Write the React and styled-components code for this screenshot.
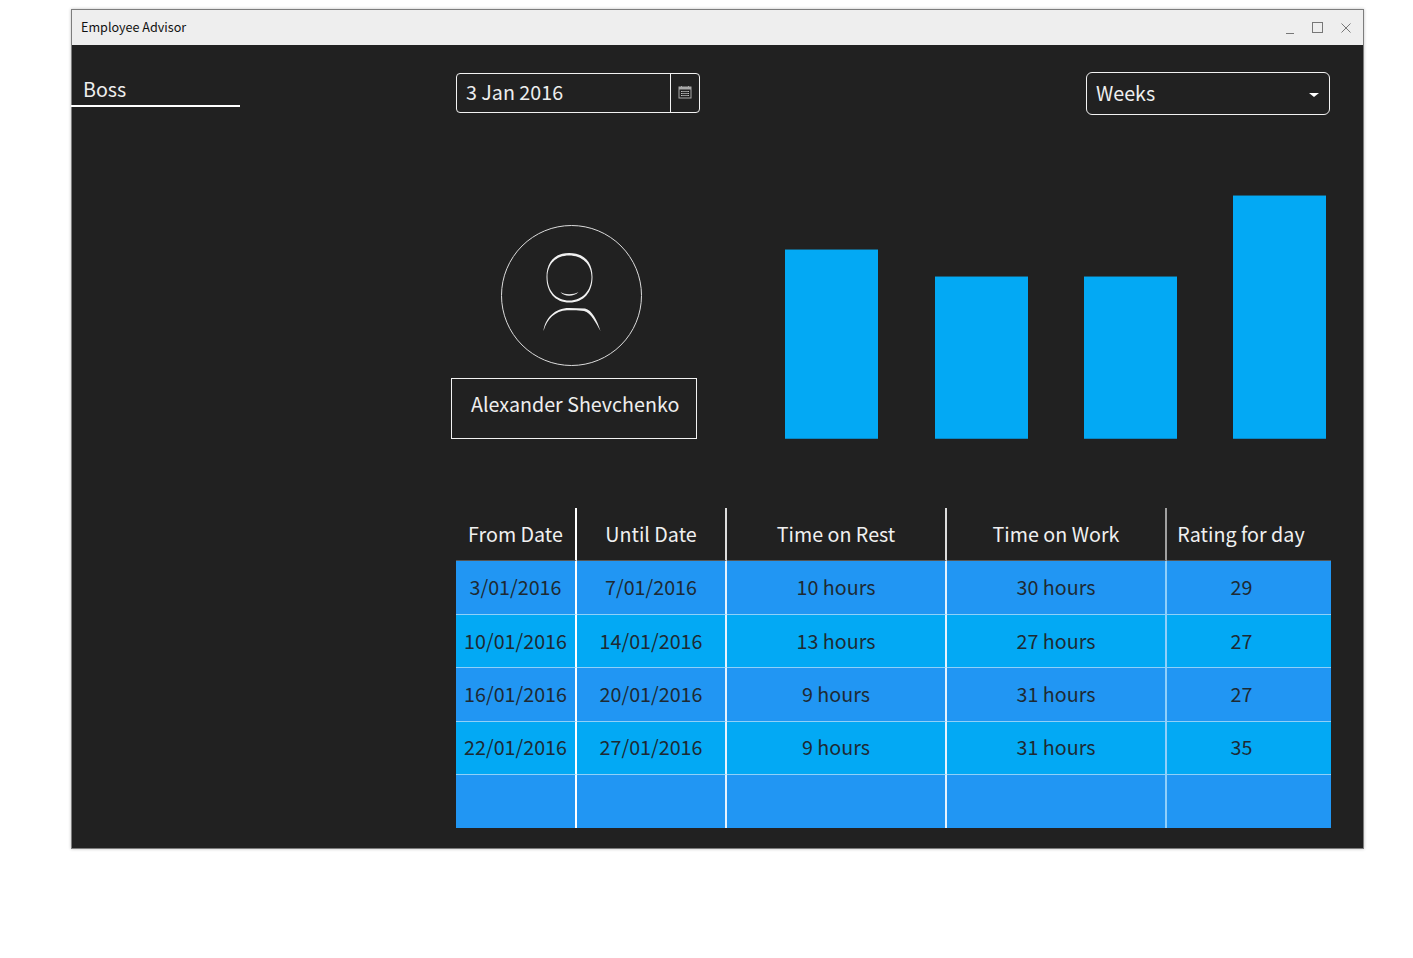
import React from 'react';
import styled, { createGlobalStyle } from 'styled-components';

const GlobalStyle = createGlobalStyle`
  html, body {
    margin: 0;
    padding: 0;
    background: #fff;
    font-family: "Noto Sans CJK SC", "Noto Sans", sans-serif;
  }
`;

const Page = styled.div`
  padding: 9px 49px 109px 71px;
`;

const Window = styled.div`
  width: 1293px;
  height: 840px;
  box-sizing: border-box;
  border: 1px solid #7d7d7d;
  box-shadow: 0 0 3px rgba(0, 0, 0, 0.25);
  background: #212121;
  display: flex;
  flex-direction: column;
`;

const TitleBar = styled.div`
  height: 35px;
  flex: none;
  background: #eeeeee;
  display: flex;
  align-items: center;
  justify-content: space-between;
  padding: 0 9px 2px 9px;
  box-sizing: border-box;
  color: #111;
  font-size: 12.6px;
`;

const WindowButtons = styled.div`
  display: flex;
  align-items: center;
  gap: 12px;
  margin-top: 2px;
`;

const WindowButton = styled.svg`
  display: block;
  width: 16px;
  height: 16px;
  fill: none;
  stroke: #777;
  stroke-width: 1;
`;

const Body = styled.div`
  flex: 1;
  display: flex;
  min-height: 0;
`;

const Sidebar = styled.nav`
  width: 169px;
  margin-left: -1px;
  flex: none;
`;

const NavItem = styled.div`
  margin-top: 28px;
  height: 34px;
  box-sizing: border-box;
  padding-left: 12px;
  border-bottom: 2px solid #fff;
  color: #eee;
  font-size: 19.7px;
  line-height: 32px;
`;

const Content = styled.main`
  margin-left: 216px;
  width: 875px;
  flex: none;
  display: flex;
  flex-direction: column;
`;

const TopRow = styled.div`
  margin-top: 27px;
  padding-right: 1px;
  display: flex;
  justify-content: space-between;
  align-items: flex-start;
`;

const DatePicker = styled.div`
  margin-top: 1px;
  width: 244px;
  height: 40px;
  box-sizing: border-box;
  border: 1px solid #f2f2f2;
  border-radius: 4px;
  display: flex;
  color: #eee;
  font-size: 19.7px;
`;

const DateValue = styled.div`
  flex: 1;
  padding-left: 9px;
  line-height: 35px;
`;

const DateButton = styled.div`
  width: 29px;
  padding-bottom: 2px;
  box-sizing: border-box;
  border-left: 1px solid #f2f2f2;
  display: flex;
  align-items: center;
  justify-content: center;
`;

const Combo = styled.div`
  width: 244px;
  height: 43px;
  box-sizing: border-box;
  border: 1px solid #f2f2f2;
  border-radius: 6px;
  display: flex;
  align-items: center;
  justify-content: space-between;
  padding: 0 10px 2px 9px;
  color: #eee;
  font-size: 19.7px;
`;

const Caret = styled.span`
  width: 0;
  height: 0;
  margin-top: 5px;
  border-left: 5px solid transparent;
  border-right: 5px solid transparent;
  border-top: 4px solid #fff;
`;

const Middle = styled.div`
  height: 324px;
  display: flex;
  align-items: flex-end;
`;

const Profile = styled.div`
  margin-left: -5px;
  width: 246px;
  flex: none;
  display: flex;
  flex-direction: column;
  align-items: center;
`;

const Avatar = styled.svg`
  display: block;
  width: 141px;
  height: 141px;
  margin-left: -5px;
  margin-bottom: 12px;
`;

const NameBox = styled.div`
  width: 100%;
  height: 61px;
  box-sizing: border-box;
  border: 1px solid #f2f2f2;
  padding-left: 19px;
  color: #eee;
  font-size: 19.7px;
  line-height: 50px;
`;

const Chart = styled.div`
  margin-left: 88.3px;
  display: flex;
  align-items: flex-end;
  gap: 56.3px;
`;

const Bar = styled.div`
  width: 93px;
  height: ${p => p.$h}px;
  box-sizing: border-box;
  background: #03a9f4;
  border-top: 1px solid #16607f;
  border-bottom: 1px solid #0a86c2;
`;

const Grid = styled.table`
  margin-top: 69px;
  width: 875px;
  table-layout: fixed;
  border-collapse: separate;
  border-spacing: 0;
`;

const HeadCell = styled.th`
  height: 53px;
  padding: 0 0 2px;
  box-sizing: border-box;
  text-align: center;
  font-weight: 400;
  font-size: 19.7px;
  color: #f0f0f0;
  border-right: 2px solid #dcdcdc;
  border-bottom: 1px solid #555;
  &:first-child {
    border-right-color: #fff;
  }
  &:nth-child(4) {
    border-right-color: #a0a0a0;
  }
  &:last-child {
    border-right: 0;
    padding-right: 16px;
  }
`;

const Row = styled.tr`
  height: ${p => p.$h}px;
  background: ${p => (p.$alt ? '#03a9f4' : '#2196f3')};
`;

const Cell = styled.td`
  padding: 0 0 ${p => p.$lift}px;
  box-sizing: border-box;
  text-align: center;
  font-size: 19.7px;
  color: #1e2a33;
  border-right: 2px solid #e6f3fd;
  border-bottom: 1px solid #8fd0f8;
  &:first-child {
    border-right-color: #fff;
  }
  &:nth-child(4) {
    border-right-color: #8fcffa;
  }
  &:last-child {
    border-right: 0;
    padding-right: 15px;
  }
  tr:last-child > & {
    border-bottom: 0;
  }
`;

const widths = [121, 150, 220, 220, 164];
const headers = ['From Date', 'Until Date', 'Time on Rest', 'Time on Work', 'Rating for day'];
const rowHeights = [54, 53, 54, 53, 53];
const rowLifts = [2, 1, 2, 3, 1];
const rows = [
  ['3/01/2016', '7/01/2016', '10 hours', '30 hours', '29'],
  ['10/01/2016', '14/01/2016', '13 hours', '27 hours', '27'],
  ['16/01/2016', '20/01/2016', '9 hours', '31 hours', '27'],
  ['22/01/2016', '27/01/2016', '9 hours', '31 hours', '35'],
  ['', '', '', '', ''],
];
const bars = [190, 163, 163, 244];

const CalendarIcon = () => (
  <svg width="14" height="14" viewBox="0 0 14 14">
    <rect x="1" y="2" width="12" height="11" fill="none" stroke="#a8a8a8" />
    <rect x="1" y="2" width="12" height="2.5" fill="#a8a8a8" />
    <path d="M3.5 1v2M10.5 1v2" stroke="#a8a8a8" />
    <path d="M3 6.5h8M3 8.5h8M3 10.5h8" stroke="#bdbdbd" strokeWidth="1" />
    <path d="M5 6v5M7 6v5M9 6v5" stroke="#212121" strokeWidth="0.6" />
  </svg>
);

const App = () => (
  <Page>
    <GlobalStyle />
    <Window>
      <TitleBar>
        <span>Employee Advisor</span>
        <WindowButtons>
          <WindowButton viewBox="0 0 16 16"><path d="M4 13.5h8" /></WindowButton>
          <WindowButton viewBox="0 0 16 16"><rect x="2.5" y="2.5" width="10" height="10" /></WindowButton>
          <WindowButton viewBox="0 0 16 16"><path d="M3.5 3.5l9 9M12.5 3.5l-9 9" /></WindowButton>
        </WindowButtons>
      </TitleBar>
      <Body>
        <Sidebar>
          <NavItem>Boss</NavItem>
        </Sidebar>
        <Content>
          <TopRow>
            <DatePicker>
              <DateValue>3 Jan 2016</DateValue>
              <DateButton><CalendarIcon /></DateButton>
            </DatePicker>
            <Combo>
              <span>Weeks</span>
              <Caret />
            </Combo>
          </TopRow>
          <Middle>
            <Profile>
              <Avatar viewBox="0 0 141 141">
                <circle cx="70.5" cy="70.5" r="70" fill="none" stroke="#dcdcdc" />
                <path
                  fill="#f0f0f0"
                  fillRule="evenodd"
                  d="M68 28C84 28 91.5 38 91.5 52C91.5 67 83 77.5 68.5 77.5C54 77.5 45.5 67 45.5 52C45.5 38 53 28 68 28ZM68 30.5C81 30.5 90.5 39 90.5 52C90.5 66 81 75.5 68.5 75.5C55 75.5 46.5 66 46.5 52C46.5 39 55 30.5 68 30.5Z"
                />
                <path fill="#e8e8e8" d="M59.5 67C64 70 72 70 77.5 67C73 72 63 72 59.5 67Z" />
                <path
                  fill="#f0f0f0"
                  d="M42.5 106C44 93 54 83 68 83L84 83.5C91 85 96 95 99.5 106C95 98 90 88 83 86C78 85 72 85 66 85.3C54 86 46 94 42.5 106Z"
                />
              </Avatar>
              <NameBox>Alexander Shevchenko</NameBox>
            </Profile>
            <Chart>
              {bars.map((h, i) => <Bar key={i} $h={h} />)}
            </Chart>
          </Middle>
          <Grid>
            <colgroup>
              {widths.map((w, i) => <col key={i} style={{ width: w }} />)}
            </colgroup>
            <thead>
              <tr>{headers.map(h => <HeadCell key={h}>{h}</HeadCell>)}</tr>
            </thead>
            <tbody>
              {rows.map((r, i) => (
                <Row key={i} $alt={i % 2 === 1} $h={rowHeights[i]}>
                  {r.map((c, j) => <Cell key={j} $lift={rowLifts[i]}>{c}</Cell>)}
                </Row>
              ))}
            </tbody>
          </Grid>
        </Content>
      </Body>
    </Window>
  </Page>
);

export default App;
